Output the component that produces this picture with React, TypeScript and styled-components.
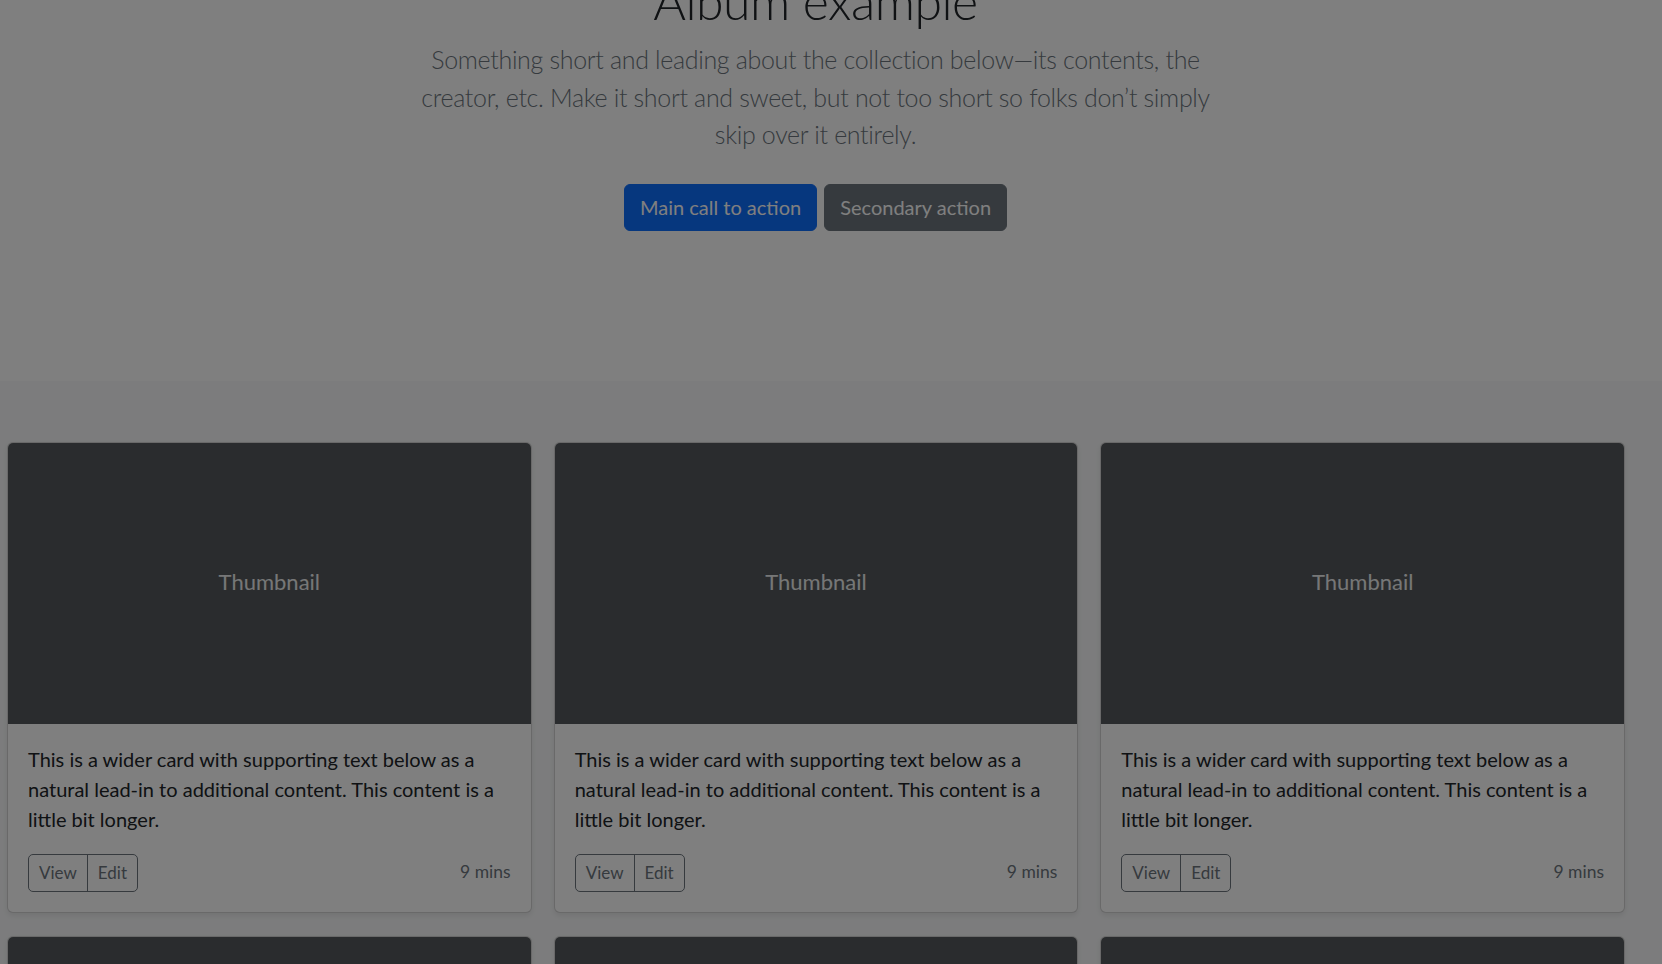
import styled, { createGlobalStyle } from 'styled-components'

const GlobalStyle = createGlobalStyle`
  html, body {
    overflow: hidden;
  }
  body {
    margin: 0;
    font-family: Lato, "Open Sans", sans-serif;
    font-size: 20px;
    line-height: 1.5;
    color: #212529;
    background: #fff;
  }
  *, *::before, *::after {
    box-sizing: border-box;
  }
`

const cards = Array.from({ length: 9 }, (_, i) => i)

const App = () => {
  return (
    <>
      <GlobalStyle />
      <main>
        <Hero>
          <HeroInner>
            <Title>Album example</Title>
            <Lead>
              Something short and leading about the collection below—its contents, the creator, etc. Make it short and
              sweet, but not too short so folks don’t simply skip over it entirely.
            </Lead>
            <Actions>
              <ActionButton variant='primary'>Main call to action</ActionButton>
              <ActionButton variant='secondary'>Secondary action</ActionButton>
            </Actions>
          </HeroInner>
        </Hero>
        <Album>
          <CardGrid>
            {cards.map((i) => (
              <Card key={i}>
                <Thumb>Thumbnail</Thumb>
                <CardBody>
                  <CardText>
                    This is a wider card with supporting text below as a natural lead-in to additional content. This
                    content is a little bit longer.
                  </CardText>
                  <CardFooter>
                    <BtnGroup>
                      <SmallButton>View</SmallButton>
                      <SmallButton>Edit</SmallButton>
                    </BtnGroup>
                    <Muted>9 mins</Muted>
                  </CardFooter>
                </CardBody>
              </Card>
            ))}
          </CardGrid>
        </Album>
      </main>
      <Backdrop />
    </>
  )
}

export default App

const Hero = styled.section`
  text-align: center;
  padding: 0 38px 140px 7px;
`

const HeroInner = styled.div`
  width: 810px;
  margin: 0 auto;
`

const Title = styled.h1`
  margin: -29px 0 10px;
  font-size: 50px;
  font-weight: 300;
  line-height: 1.2;
  letter-spacing: -0.5px;
`

const Lead = styled.p`
  margin: 0 0 20px;
  font-size: 25px;
  font-weight: 300;
  line-height: 1.5;
  letter-spacing: -0.33px;
  color: #6c757d;
`

const Actions = styled.div`
  display: flex;
  justify-content: center;
  gap: 7px;
`

interface ActionButtonProps {
  variant: 'primary' | 'secondary'
}

const ActionButton = styled.button<ActionButtonProps>`
  margin: 10px 0;
  padding: 7.5px 15px;
  font-family: inherit;
  font-size: 20px;
  line-height: 1.5;
  color: #fff;
  border-radius: 6px;
  cursor: pointer;
  border: 1px solid ${({ variant }) => (variant === 'primary' ? '#0d6efd' : '#6c757d')};
  background-color: ${({ variant }) => (variant === 'primary' ? '#0d6efd' : '#6c757d')};
`

const Album = styled.div`
  background: #f8f9fa;
  padding: 61px 37px 60px 7px;
`

const CardGrid = styled.div`
  display: grid;
  grid-template-columns: repeat(3, 1fr);
  column-gap: 22px;
  row-gap: 23px;
`

const Card = styled.div`
  display: flex;
  flex-direction: column;
  background: #fff;
  border: 1px solid rgba(0, 0, 0, 0.175);
  border-radius: 6px;
  overflow: hidden;
  box-shadow: 0 2.5px 5px rgba(0, 0, 0, 0.075);
`

const Thumb = styled.div`
  height: 281px;
  display: flex;
  align-items: center;
  justify-content: center;
  padding-bottom: 3px;
  background: #55595c;
  color: #eceeef;
  font-size: 22px;
`

const CardBody = styled.div`
  padding: 20px;
`

const CardText = styled.p`
  margin: 0 0 20px;
  font-size: 20px;
  line-height: 1.5;
`

const CardFooter = styled.div`
  display: flex;
  justify-content: space-between;
  align-items: center;
`

const BtnGroup = styled.div`
  display: inline-flex;
  border: 1px solid #6c757d;
  border-radius: 5px;
  overflow: hidden;
`

const SmallButton = styled.button`
  padding: 5px 10px;
  font-family: inherit;
  font-size: 17px;
  line-height: 26px;
  color: #6c757d;
  background: transparent;
  border: none;
  cursor: pointer;

  & + & {
    border-left: 1px solid #6c757d;
  }
`

const Muted = styled.small`
  font-size: 17.5px;
  color: #6c757d;
`

const Backdrop = styled.div`
  position: fixed;
  inset: 0;
  background: rgba(0, 0, 0, 0.5);
`
